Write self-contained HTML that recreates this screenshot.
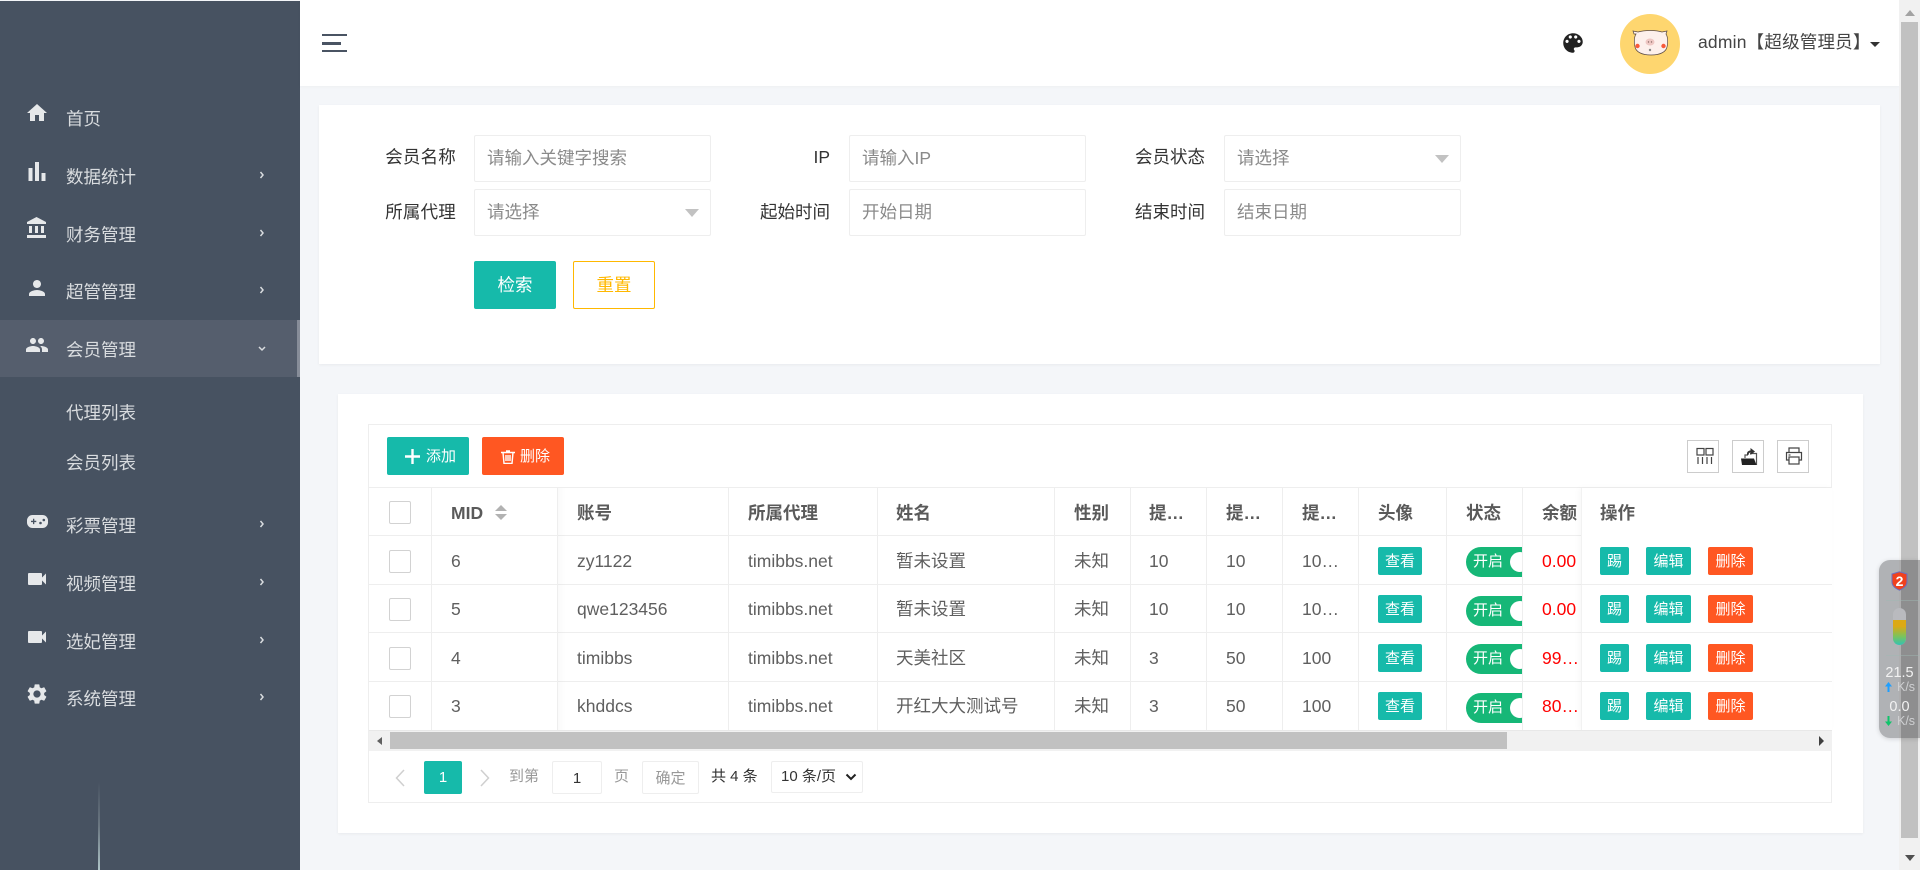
<!DOCTYPE html>
<html lang="zh-CN">
<head>
<meta charset="utf-8">
<title>会员列表</title>
<style>
html,body{margin:0;padding:0;width:1920px;height:870px;overflow:hidden;background:#f4f6f9;font-family:"Liberation Sans","Noto Sans CJK SC",sans-serif;}
div,span,svg{position:absolute;box-sizing:border-box;}
.t{white-space:nowrap;font-size:17.5px;line-height:24px;height:24px;}
.m{color:#d9dcdf;left:66px;}
.chev{left:258px;width:7px;height:10px;}
.lb{color:#333;text-align:right;width:120px;}
.ph{color:#8a8a8a;}
.inp{background:#fff;border:1px solid #eee;border-radius:2px;height:47px;width:237px;}
.arr{width:0;height:0;border-left:7px solid transparent;border-right:7px solid transparent;border-top:8px solid #c2c2c2;}
.btn{text-align:center;color:#fff;border-radius:2px;}
.hl{left:369px;width:1463px;height:1px;background:#eee;}
.vl{top:488px;width:1px;height:242px;background:#eee;}
.row{left:0;top:0;width:1920px;height:48px;}
.row .c{line-height:48px;height:48px;top:0;white-space:nowrap;font-size:17.5px;color:#5f5f5f;}
.th{top:501px;font-weight:bold;color:#5a5a5a;}
.cb{left:389px;width:22px;height:23px;border:1px solid #d2d2d2;border-radius:2px;background:#fff;}
.b{height:28px;line-height:29px;font-size:15px;color:#fff;text-align:center;border-radius:2px;}
.g{background:#16baaa;}
.o{background:#ff5722;}
.sw{left:1466px;width:56px;height:30px;overflow:hidden;}
.sw i{position:absolute;left:0;top:0;width:80px;height:30px;border-radius:15px;background:#16b777;}
.sw b{position:absolute;left:44px;top:5px;width:20px;height:20px;border-radius:50%;background:#fff;}
.sw span{left:7px;top:0;line-height:30px;font-size:15px;color:#fff;white-space:nowrap;}
.red{color:#ff0000 !important;}
.ti{width:32px;height:33px;top:440px;border:1px solid #ccc;background:#fff;}
</style>
</head>
<body>

<!-- sidebar -->
<div style="left:0;top:1px;width:300px;height:869px;background:#475261;"></div>
<div style="left:0;top:320px;width:300px;height:57px;background:#555e6d;"></div>
<div style="left:297px;top:320px;width:3px;height:57px;background:#878d99;"></div>
<div style="left:98px;top:782px;width:2px;height:88px;background:linear-gradient(to bottom,rgba(200,210,215,0),rgba(190,205,205,.3) 50%,rgba(200,225,225,.8));"></div>

<svg style="left:25px;top:101px" width="24" height="24" viewBox="0 0 24 24" fill="#e6e8ea"><path d="M10 20v-6h4v6h5v-8h3L12 3 2 12h3v8z"/></svg>
<svg style="left:28px;top:162px" width="18" height="19" viewBox="0 0 18 19" fill="#e6e8ea"><rect x="0.5" y="6" width="4" height="13"/><rect x="7" y="0" width="4" height="19"/><rect x="13.500" y="11" width="4" height="8"/></svg>
<svg style="left:25px;top:216px" width="24" height="24" viewBox="0 0 24 24" fill="#e6e8ea"><path d="M4 10v7h3v-7H4zm6 0v7h3v-7h-3zM2 22h19v-3H2v3zm14-12v7h3v-7h-3zm-4.500-9L2 6v2h19V6l-9.500-5z"/></svg>
<svg style="left:25px;top:276px" width="24" height="24" viewBox="0 0 24 24" fill="#e6e8ea"><path d="M12 12c2.210 0 4-1.790 4-4s-1.790-4-4-4-4 1.790-4 4 1.790 4 4 4zm0 2c-2.670 0-8 1.340-8 4v2h16v-2c0-2.660-5.330-4-8-4z"/></svg>
<svg style="left:25px;top:333px" width="24" height="24" viewBox="0 0 24 24" fill="#e6e8ea"><path d="M16 11c1.660 0 2.990-1.340 2.990-3S17.660 5 16 5c-1.660 0-3 1.340-3 3s1.340 3 3 3zm-8 0c1.660 0 2.990-1.340 2.990-3S9.660 5 8 5C6.340 5 5 6.340 5 8s1.340 3 3 3zm0 2c-2.330 0-7 1.170-7 3.500V19h14v-2.500c0-2.330-4.670-3.500-7-3.500zm8 0c-.29 0-.62.02-.97.05 1.160.84 1.970 1.970 1.970 3.450V19h6v-2.500c0-2.330-4.670-3.500-7-3.500z"/></svg>
<svg style="left:27px;top:515px" width="21" height="13" viewBox="0 0 21 13"><rect x="0" y="0" width="21" height="13" rx="5.500" fill="#e6e8ea"/><path d="M4 5.800h2V3.800h1.300v2h2v1.300h-2v2H6v-2H4z" fill="#475261"/><circle cx="13.500" cy="8" r="1.300" fill="#475261"/><circle cx="16.800" cy="5" r="1.300" fill="#475261"/></svg>
<svg style="left:25px;top:567px" width="24" height="24" viewBox="0 0 24 24" fill="#e6e8ea"><path d="M17 10.500V7c0-.55-.45-1-1-1H4c-.55 0-1 .45-1 1v10c0 .55.45 1 1 1h12c.55 0 1-.45 1-1v-3.500l4 4v-11l-4 4z"/></svg>
<svg style="left:25px;top:625px" width="24" height="24" viewBox="0 0 24 24" fill="#e6e8ea"><path d="M17 10.500V7c0-.55-.45-1-1-1H4c-.55 0-1 .45-1 1v10c0 .55.45 1 1 1h12c.55 0 1-.45 1-1v-3.500l4 4v-11l-4 4z"/></svg>
<svg style="left:25px;top:682px" width="24" height="24" viewBox="0 0 24 24" fill="#e6e8ea"><path d="M19.140 12.940c.04-.3.06-.61.06-.94 0-.32-.02-.64-.07-.94l2.030-1.580c.18-.14.23-.41.12-.61l-1.920-3.320c-.12-.22-.37-.29-.59-.22l-2.390.96c-.5-.38-1.030-.7-1.620-.94l-.36-2.540c-.04-.24-.24-.41-.48-.41h-3.840c-.24 0-.43.17-.47.41l-.36 2.540c-.59.24-1.130.57-1.620.94l-2.390-.96c-.22-.08-.47 0-.59.22L2.740 8.870c-.12.21-.08.47.12.61l2.030 1.580c-.05.3-.09.63-.09.94s.02.64.07.94l-2.030 1.580c-.18.14-.23.41-.12.61l1.920 3.320c.12.22.37.29.59.22l2.390-.96c.5.38 1.030.7 1.620.94l.36 2.540c.05.24.24.41.48.41h3.840c.24 0 .44-.17.47-.41l.36-2.540c.59-.24 1.130-.56 1.620-.94l2.390.96c.22.08.47 0 .59-.22l1.920-3.320c.12-.22.07-.47-.12-.61l-2.010-1.580zM12 15.600c-1.980 0-3.600-1.620-3.600-3.600s1.620-3.600 3.600-3.600 3.600 1.620 3.600 3.600-1.620 3.600-3.600 3.600z"/></svg>

<div class="t m" style="top:107px">首页</div>
<div class="t m" style="top:165px">数据统计</div>
<div class="t m" style="top:223px">财务管理</div>
<div class="t m" style="top:280px">超管管理</div>
<div class="t m" style="top:338px">会员管理</div>
<div class="t m" style="top:401px">代理列表</div>
<div class="t m" style="top:451px">会员列表</div>
<div class="t m" style="top:514px">彩票管理</div>
<div class="t m" style="top:572px">视频管理</div>
<div class="t m" style="top:630px">选妃管理</div>
<div class="t m" style="top:687px">系统管理</div>

<svg class="chev" style="top:170px" viewBox="0 0 7 10"><path d="M2.500 2L5 5 2.500 8" fill="none" stroke="#d9dcdf" stroke-width="1.500"/></svg>
<svg class="chev" style="top:228px" viewBox="0 0 7 10"><path d="M2.500 2L5 5 2.500 8" fill="none" stroke="#d9dcdf" stroke-width="1.500"/></svg>
<svg class="chev" style="top:285px" viewBox="0 0 7 10"><path d="M2.500 2L5 5 2.500 8" fill="none" stroke="#d9dcdf" stroke-width="1.500"/></svg>
<svg class="chev" style="left:257px;top:345px;width:10px;height:7px" viewBox="0 0 10 7"><path d="M2 2L5 5 8 2" fill="none" stroke="#d9dcdf" stroke-width="1.500"/></svg>
<svg class="chev" style="top:519px" viewBox="0 0 7 10"><path d="M2.500 2L5 5 2.500 8" fill="none" stroke="#d9dcdf" stroke-width="1.500"/></svg>
<svg class="chev" style="top:577px" viewBox="0 0 7 10"><path d="M2.500 2L5 5 2.500 8" fill="none" stroke="#d9dcdf" stroke-width="1.500"/></svg>
<svg class="chev" style="top:635px" viewBox="0 0 7 10"><path d="M2.500 2L5 5 2.500 8" fill="none" stroke="#d9dcdf" stroke-width="1.500"/></svg>
<svg class="chev" style="top:692px" viewBox="0 0 7 10"><path d="M2.500 2L5 5 2.500 8" fill="none" stroke="#d9dcdf" stroke-width="1.500"/></svg>

<!-- header -->
<div style="left:300px;top:0;width:1599px;height:86px;background:#fff;box-shadow:0 1px 3px rgba(0,0,0,.03);"></div>
<div style="left:322px;top:34px;width:25px;height:2px;background:#4a5463;"></div>
<div style="left:322px;top:42px;width:19px;height:3px;background:#4a5463;"></div>
<div style="left:322px;top:50px;width:25px;height:2px;background:#4a5463;"></div>
<svg style="left:1560px;top:30px" width="26" height="26" viewBox="0 0 24 24" fill="#222"><path d="M12 3c-4.970 0-9 4.030-9 9s4.030 9 9 9c.83 0 1.500-.67 1.500-1.500 0-.39-.15-.74-.39-1.010-.23-.26-.38-.61-.38-.99 0-.83.67-1.500 1.500-1.500H16c2.760 0 5-2.240 5-5 0-4.420-4.030-8-9-8zm-5.500 9c-.83 0-1.500-.67-1.500-1.500S5.670 9 6.500 9 8 9.670 8 10.500 7.330 12 6.500 12zm3-4C8.670 8 8 7.330 8 6.500S8.670 5 9.500 5s1.500.67 1.500 1.500S10.330 8 9.500 8zm5 0c-.83 0-1.500-.67-1.500-1.500S13.670 5 14.500 5s1.500.67 1.500 1.500S15.330 8 14.500 8zm3 4c-.83 0-1.500-.67-1.500-1.500S16.670 9 17.500 9s1.500.67 1.500 1.500-.67 1.500-1.500 1.500z"/></svg>
<svg style="left:1620px;top:14px" width="60" height="60" viewBox="0 0 60 60">
<circle cx="30" cy="30" r="30" fill="#fed66f"/>
<path d="M14 20l-1-3 5 1c7-2 17-2 24 0l5-1-1 3c2 3 2 9 1 13-1 5-7 8-16 8s-15-3-16-8c-1-4-1-10 1-13z" fill="#fdf0ec" stroke="#5a4a44" stroke-width=".7"/>
<circle cx="17.500" cy="32" r="2.200" fill="#f7593a"/><circle cx="43.500" cy="32" r="2.200" fill="#f7593a"/>
<ellipse cx="30" cy="28" rx="4.500" ry="3.500" fill="#efc8c4"/>
<circle cx="28.500" cy="28" r=".7" fill="#8a6a66"/><circle cx="31.500" cy="28" r=".7" fill="#8a6a66"/>
<circle cx="30" cy="36" r="1.200" fill="#888"/>
</svg>
<div class="t" style="left:1698px;top:30px;color:#444;letter-spacing:.2px;">admin【超级管理员】</div>
<div style="left:1870px;top:42px;width:0;height:0;border-left:5px solid transparent;border-right:5px solid transparent;border-top:5px solid #333;"></div>

<!-- search card -->
<div style="left:319px;top:105px;width:1561px;height:259px;background:#fff;box-shadow:0 1px 3px rgba(0,0,0,.05);"></div>

<div class="t lb" style="left:336px;top:145px;letter-spacing:.2px">会员名称</div>
<div class="t lb" style="left:336px;top:200px;letter-spacing:.2px">所属代理</div>
<div class="t lb" style="left:710px;top:145px">IP</div>
<div class="t lb" style="left:710px;top:200px">起始时间</div>
<div class="t lb" style="left:1085px;top:145px">会员状态</div>
<div class="t lb" style="left:1085px;top:200px">结束时间</div>

<div class="inp" style="left:474px;top:135px"></div>
<div class="inp" style="left:474px;top:189px"></div>
<div class="inp" style="left:849px;top:135px"></div>
<div class="inp" style="left:849px;top:189px"></div>
<div class="inp" style="left:1224px;top:135px"></div>
<div class="inp" style="left:1224px;top:189px"></div>

<div class="t ph" style="left:487px;top:146px">请输入关键字搜索</div>
<div class="t ph" style="left:487px;top:200px">请选择</div>
<div class="t ph" style="left:862px;top:146px">请输入IP</div>
<div class="t ph" style="left:862px;top:200px">开始日期</div>
<div class="t ph" style="left:1237px;top:146px">请选择</div>
<div class="t ph" style="left:1237px;top:200px">结束日期</div>
<div class="arr" style="left:1435px;top:155px"></div>
<div class="arr" style="left:685px;top:209px"></div>

<div class="btn g" style="left:474px;top:261px;width:82px;height:48px;line-height:48px;font-size:17.5px;">检索</div>
<div class="btn" style="left:573px;top:261px;width:82px;height:48px;line-height:46px;font-size:17.5px;background:#fff;border:1px solid #ffb800;color:#ffb800;">重置</div>

<!-- table card -->
<div style="left:338px;top:394px;width:1525px;height:439px;background:#fff;box-shadow:0 1px 3px rgba(0,0,0,.05);"></div>
<div style="left:368px;top:424px;width:1464px;height:379px;border:1px solid #eee;"></div>

<!-- toolbar -->
<div class="btn g" style="left:387px;top:437px;width:82px;height:38px;"></div>
<svg style="left:405px;top:449px" width="15" height="15" viewBox="0 0 15 15"><path d="M7.500 0v15M0 7.500h15" stroke="#fff" stroke-width="2.400"/></svg>
<div class="t" style="left:426px;top:445px;font-size:15px;color:#fff;">添加</div>
<div class="btn o" style="left:482px;top:437px;width:82px;height:38px;"></div>
<svg style="left:501px;top:450px" width="14" height="14" viewBox="0 0 14 14" fill="none" stroke="#fff" stroke-width="1.400"><path d="M0 2.500h14M2 2.500l1 11h8l1-11M5 1h4"/><path d="M5 5v6M7 5v6M9 5v6"/></svg>
<div class="t" style="left:520px;top:445px;font-size:15px;color:#fff;">删除</div>

<div class="ti" style="left:1687px"></div>
<svg style="left:1696px;top:447px" width="18" height="18" viewBox="0 0 18 18" fill="none" stroke="#444" stroke-width="1.200"><rect x="1" y="1.500" width="7" height="6.500"/><rect x="10" y="1.500" width="7" height="6.500"/><path d="M2 10v7M6.500 10v7M11 10v7M15.500 10v7"/></svg>
<div class="ti" style="left:1732px"></div>
<svg style="left:1740px;top:447px" width="18" height="19" viewBox="0 0 18 19"><path d="M5 11V8h3M10 6.500h6.500V18" fill="none" stroke="#555" stroke-width="1.200"/><path d="M1 11.500h13l2.500 6.500H2z" fill="#222"/><path d="M7 8V6.500C7 4.800 8.800 3.500 10.500 3.500V1L15 4.500 10.500 8V5.500C9.300 5.500 8.500 6.500 8.500 8z" fill="#333"/></svg>
<div class="ti" style="left:1777px"></div>
<svg style="left:1785px;top:447px" width="18" height="18" viewBox="0 0 18 18" fill="none" stroke="#444" stroke-width="1.200"><path d="M4 5V1h10v4M4 13H1.500V5.500h15V13H14"/><rect x="4" y="10" width="10" height="7"/><path d="M3.500 8h2"/></svg>

<!-- grid lines -->
<div class="hl" style="top:487px"></div>
<div class="hl" style="top:535px"></div>
<div class="hl" style="top:584px"></div>
<div class="hl" style="top:632px"></div>
<div class="hl" style="top:681px"></div>
<div class="vl" style="left:431px"></div>
<div class="vl" style="left:557px"></div>
<div class="vl" style="left:728px"></div>
<div class="vl" style="left:877px"></div>
<div class="vl" style="left:1054px"></div>
<div class="vl" style="left:1130px"></div>
<div class="vl" style="left:1206px"></div>
<div class="vl" style="left:1282px"></div>
<div class="vl" style="left:1358px"></div>
<div class="vl" style="left:1446px"></div>
<div class="vl" style="left:1522px"></div>
<div style="left:558px;top:488px;width:8px;height:242px;background:linear-gradient(to right,rgba(0,0,0,.02),rgba(0,0,0,0));"></div>

<!-- header cells -->
<div class="cb" style="top:501px"></div>
<div class="t th" style="left:451px">MID</div>
<div style="left:495px;top:505px;width:0;height:0;border-left:6px solid transparent;border-right:6px solid transparent;border-bottom:6px solid #b2b2b2;"></div>
<div style="left:495px;top:514px;width:0;height:0;border-left:6px solid transparent;border-right:6px solid transparent;border-top:6px solid #b2b2b2;"></div>
<div class="t th" style="left:577px">账号</div>
<div class="t th" style="left:748px">所属代理</div>
<div class="t th" style="left:896px">姓名</div>
<div class="t th" style="left:1074px">性别</div>
<div class="t th" style="left:1149px">提…</div>
<div class="t th" style="left:1226px">提…</div>
<div class="t th" style="left:1302px">提…</div>
<div class="t th" style="left:1378px">头像</div>
<div class="t th" style="left:1466px">状态</div>
<div class="t th" style="left:1542px">余额</div>

<!-- rows -->
<div class="cb" style="top:550px"></div>
<div class="row" style="top:537px">
<div class="c" style="left:451px">6</div><div class="c" style="left:577px">zy1122</div><div class="c" style="left:748px">timibbs.net</div><div class="c" style="left:896px">暂未设置</div><div class="c" style="left:1074px">未知</div><div class="c" style="left:1149px">10</div><div class="c" style="left:1226px">10</div><div class="c" style="left:1302px">10…</div><div class="c red" style="left:1542px">0.00</div>
</div>
<div class="b g" style="left:1378px;top:547px;width:44px">查看</div>
<div class="sw" style="top:547px"><i></i><b></b><span>开启</span></div>

<div class="cb" style="top:598px"></div>
<div class="row" style="top:585px">
<div class="c" style="left:451px">5</div><div class="c" style="left:577px">qwe123456</div><div class="c" style="left:748px">timibbs.net</div><div class="c" style="left:896px">暂未设置</div><div class="c" style="left:1074px">未知</div><div class="c" style="left:1149px">10</div><div class="c" style="left:1226px">10</div><div class="c" style="left:1302px">10…</div><div class="c red" style="left:1542px">0.00</div>
</div>
<div class="b g" style="left:1378px;top:595px;width:44px">查看</div>
<div class="sw" style="top:596px"><i></i><b></b><span>开启</span></div>

<div class="cb" style="top:647px"></div>
<div class="row" style="top:634px">
<div class="c" style="left:451px">4</div><div class="c" style="left:577px">timibbs</div><div class="c" style="left:748px">timibbs.net</div><div class="c" style="left:896px">天美社区</div><div class="c" style="left:1074px">未知</div><div class="c" style="left:1149px">3</div><div class="c" style="left:1226px">50</div><div class="c" style="left:1302px">100</div><div class="c red" style="left:1542px">99…</div>
</div>
<div class="b g" style="left:1378px;top:644px;width:44px">查看</div>
<div class="sw" style="top:644px"><i></i><b></b><span>开启</span></div>

<div class="cb" style="top:695px"></div>
<div class="row" style="top:682px">
<div class="c" style="left:451px">3</div><div class="c" style="left:577px">khddcs</div><div class="c" style="left:748px">timibbs.net</div><div class="c" style="left:896px">开红大大测试号</div><div class="c" style="left:1074px">未知</div><div class="c" style="left:1149px">3</div><div class="c" style="left:1226px">50</div><div class="c" style="left:1302px">100</div><div class="c red" style="left:1542px">80…</div>
</div>
<div class="b g" style="left:1378px;top:692px;width:44px">查看</div>
<div class="sw" style="top:693px"><i></i><b></b><span>开启</span></div>

<!-- fixed right -->
<div style="left:1581px;top:488px;width:251px;height:242px;background:#fff;border-left:1px solid #f2f2f2;box-shadow:-2px 0 6px rgba(0,0,0,.03);"></div>
<div style="left:1581px;top:584px;width:251px;height:1px;background:#eee;"></div>
<div style="left:1581px;top:632px;width:251px;height:1px;background:#eee;"></div>
<div style="left:1581px;top:681px;width:251px;height:1px;background:#eee;"></div>
<div class="t th" style="left:1600px">操作</div>

<div class="b g" style="left:1600px;top:547px;width:29px">踢</div><div class="b g" style="left:1646px;top:547px;width:45px">编辑</div><div class="b o" style="left:1708px;top:547px;width:45px">删除</div>
<div class="b g" style="left:1600px;top:595px;width:29px">踢</div><div class="b g" style="left:1646px;top:595px;width:45px">编辑</div><div class="b o" style="left:1708px;top:595px;width:45px">删除</div>
<div class="b g" style="left:1600px;top:644px;width:29px">踢</div><div class="b g" style="left:1646px;top:644px;width:45px">编辑</div><div class="b o" style="left:1708px;top:644px;width:45px">删除</div>
<div class="b g" style="left:1600px;top:692px;width:29px">踢</div><div class="b g" style="left:1646px;top:692px;width:45px">编辑</div><div class="b o" style="left:1708px;top:692px;width:45px">删除</div>

<!-- horizontal scrollbar -->
<div style="left:369px;top:730px;width:1463px;height:21px;background:#f1f1f1;border-top:1px solid #e8e8e8;"></div>
<div style="left:390px;top:732px;width:1117px;height:17px;background:#c1c1c1;"></div>
<div style="left:377px;top:737px;width:0;height:0;border-top:4px solid transparent;border-bottom:4px solid transparent;border-right:5px solid #606060;"></div>
<div style="left:1819px;top:736px;width:0;height:0;border-top:5px solid transparent;border-bottom:5px solid transparent;border-left:5px solid #404040;"></div>

<!-- pagination -->
<svg style="left:394px;top:768px" width="12" height="20" viewBox="0 0 12 20"><path d="M10 2L2.500 10 10 18" fill="none" stroke="#cfcfcf" stroke-width="1.500"/></svg>
<div class="btn g" style="left:424px;top:761px;width:38px;height:33px;line-height:33px;font-size:15px;">1</div>
<svg style="left:479px;top:768px" width="12" height="20" viewBox="0 0 12 20"><path d="M2 2l7.500 8L2 18" fill="none" stroke="#cfcfcf" stroke-width="1.500"/></svg>
<div class="t" style="left:509px;top:765px;font-size:15px;color:#999;">到第</div>
<div style="left:552px;top:761px;width:50px;height:33px;border:1px solid #eee;border-radius:2px;text-align:center;line-height:33px;font-size:15px;color:#333;">1</div>
<div class="t" style="left:614px;top:765px;font-size:15px;color:#999;">页</div>
<div style="left:642px;top:761px;width:57px;height:33px;border:1px solid #eee;border-radius:2px;text-align:center;line-height:33px;font-size:15px;color:#999;">确定</div>
<div class="t" style="left:711px;top:765px;font-size:15px;color:#333;">共 4 条</div>
<div style="left:771px;top:761px;width:92px;height:32px;border:1px solid #eee;border-radius:2px;"></div>
<div class="t" style="left:781px;top:765px;font-size:15px;color:#333;">10 条/页</div>
<svg style="left:845px;top:773px" width="12" height="8" viewBox="0 0 12 8"><path d="M1.500 1.500L6 6l4.500-4.500" fill="none" stroke="#222" stroke-width="2"/></svg>

<!-- page scrollbar -->
<div style="left:1899px;top:0;width:21px;height:870px;background:#f1f1f1;"></div>
<div style="left:1901px;top:22px;width:17px;height:816px;background:#c1c1c1;"></div>
<div style="left:1905px;top:10px;width:0;height:0;border-left:5px solid transparent;border-right:5px solid transparent;border-bottom:6px solid #a3a3a3;"></div>
<div style="left:1905px;top:855px;width:0;height:0;border-left:5px solid transparent;border-right:5px solid transparent;border-top:6px solid #505050;"></div>

<!-- floating widget -->
<div style="left:1879px;top:560px;width:41px;height:178px;background:rgba(39,39,42,.33);border-radius:11px 0 0 11px;box-shadow:0 1px 5px rgba(0,0,0,.15);"></div>
<svg style="left:1891px;top:571px" width="17" height="20" viewBox="0 0 17 20"><path d="M8.500 .8L16 3v8c0 4-3.500 6.500-7.500 8.200C4.500 17.500 1 15 1 11V3z" fill="#f0411e" stroke="#6a6fc0" stroke-width="1"/></svg>
<div style="left:1891px;top:571px;width:17px;height:20px;line-height:20px;text-align:center;font-size:14px;font-weight:bold;color:#fff;">2</div>
<div style="left:1886px;top:600px;width:34px;height:1px;background:rgba(160,185,180,.45);"></div>
<div style="left:1893px;top:608px;width:13px;height:37px;background:#b9babe;border-radius:7px;overflow:hidden;"><div style="left:0;top:12px;width:13px;height:25px;background:linear-gradient(to bottom,#dca915,#dca915 25%,#7cc35c 65%,#33c3b3);"></div></div>
<div style="left:1886px;top:655px;width:34px;height:1px;background:rgba(160,185,180,.45);"></div>
<div class="t" style="left:1879px;top:661px;width:41px;text-align:center;font-size:14.500px;color:#f2f2f2;">21.5</div>
<div class="t" style="left:1897px;top:675px;font-size:12.500px;color:#cfd0d2;">K/s</div>
<svg style="left:1885px;top:682px" width="7" height="10" viewBox="0 0 7 10"><path d="M3.500 0L7 4.500H4.500V10h-2V4.500H0z" fill="#1e9fff"/></svg>
<div class="t" style="left:1879px;top:695px;width:41px;text-align:center;font-size:14.500px;color:#f2f2f2;">0.0</div>
<div class="t" style="left:1897px;top:709px;font-size:12.500px;color:#cfd0d2;">K/s</div>
<svg style="left:1885px;top:716px" width="7" height="10" viewBox="0 0 7 10"><path d="M2.500 0h2v5.500H7L3.500 10 0 5.500h2.500z" fill="#0fc46a"/></svg>

</body>
</html>
